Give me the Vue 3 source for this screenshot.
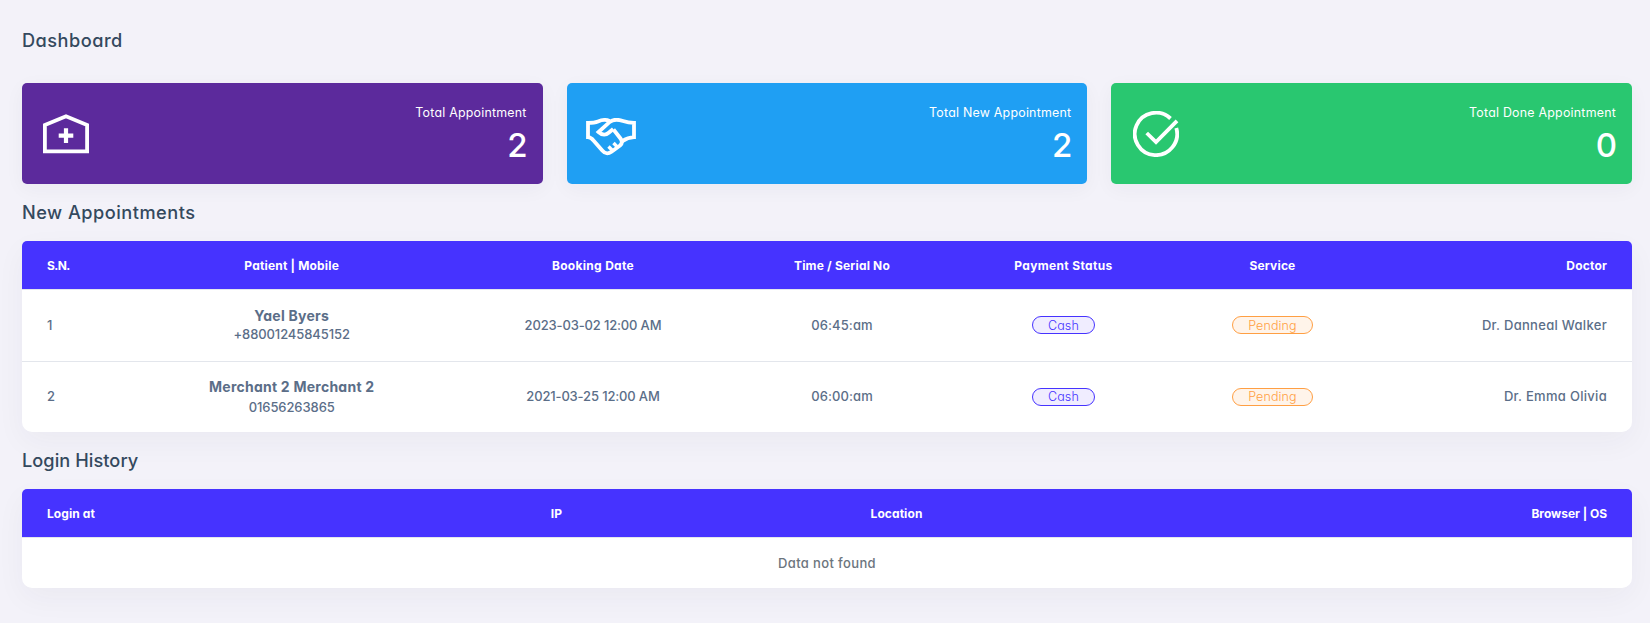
<script setup>
const cards = [
  { label: 'Total Appointment', value: 2, tone: 'purple', icon: 'clinic' },
  { label: 'Total New Appointment', value: 2, tone: 'blue', icon: 'handshake' },
  { label: 'Total Done Appointment', value: 0, tone: 'green', icon: 'check' },
]
const appointments = [
  { sn: 1, name: 'Yael Byers', mobile: '+88001245845152', date: '2023-03-02 12:00 AM', time: '06:45:am', doctor: 'Dr. Danneal Walker' },
  { sn: 2, name: 'Merchant 2 Merchant 2', mobile: '01656263865', date: '2021-03-25 12:00 AM', time: '06:00:am', doctor: 'Dr. Emma Olivia' },
]
const columns = ['S.N.', 'Patient | Mobile', 'Booking Date', 'Time / Serial No', 'Payment Status', 'Service', 'Doctor']
const loginColumns = ['Login at', 'IP', 'Location', 'Browser | OS']
</script>

<template>
  <main class="page">
    <h1 class="title page-title">Dashboard</h1>
    <section class="cards">
      <article v-for="card in cards" :key="card.label" class="card" :class="card.tone">
        <svg v-if="card.icon === 'clinic'" class="icon clinic" viewBox="0 0 46 40">
          <path d="M1.9 11.1 23 2.2l21.1 8.9v26.3H1.9z" />
          <path d="M23 14.3v14.7M15.7 21.7h14.6" stroke-width="4.2" />
        </svg>
        <svg v-else-if="card.icon === 'handshake'" class="icon handshake" viewBox="0 0 50 38">
          <path d="M23.5 3C20 1.3 16 1.7 12 3.4 9 4.6 6 4.8 2 4.8V19.2Q5 19.4 7.5 22.5L16.5 32.8Q20.5 37.4 25.5 33.8L34 27.5Q37.5 24.5 34.5 20.5L27.5 11.5" />
          <path d="M36 23.3Q42 19.5 48 19.2V4.8C43 4.8 40 4 37 3 30.5.8 26.5 1.5 23.5 4.2L12.5 14Q18 19 23 14.5L27.2 11" />
          <path d="M22.5 28.5 26.5 32.5M27.5 25 31 28.7" stroke-width="3.4" />
        </svg>
        <svg v-else class="icon check" viewBox="0 0 46 46">
          <path d="M37.5 7.5A21.2 21.2 0 1 0 43.3 17" />
          <path d="M13.7 22 23 31 44 9.8" />
        </svg>
        <div class="figures">
          <p class="label">{{ card.label }}</p>
          <p class="value">{{ card.value }}</p>
        </div>
      </article>
    </section>

    <h2 class="title">New Appointments</h2>
    <section class="panel appointments">
      <div class="row head">
        <div v-for="name in columns" :key="name">{{ name }}</div>
      </div>
      <div v-for="item in appointments" :key="item.sn" class="row body">
        <div class="cell">{{ item.sn }}</div>
        <div class="patient">
          <strong>{{ item.name }}</strong>
          {{ item.mobile }}
        </div>
        <div class="cell date">{{ item.date }}</div>
        <div class="cell time">{{ item.time }}</div>
        <div><span class="badge cash">Cash</span></div>
        <div><span class="badge pending">Pending</span></div>
        <div class="cell doctor">{{ item.doctor }}</div>
      </div>
    </section>

    <h2 class="title login-title">Login History</h2>
    <section class="panel logins">
      <div class="row head">
        <div v-for="name in loginColumns" :key="name">{{ name }}</div>
      </div>
      <p class="empty">Data not found</p>
    </section>
  </main>
</template>

<style>
body { background: #f3f2f9; }
</style>

<style scoped>
.page {
  box-sizing: border-box;
  height: 623px;
  padding: 0 18px 0 22px;
  overflow: hidden;
  font-family: Inter, "Open Sans", sans-serif;
  font-feature-settings: "cv11";
  font-size: 13px;
  font-weight: 500;
  color: #5b6e88;
}
p, h1, h2 { margin: 0; }
.title { height: 57px; line-height: 57px; font-size: 18.2px; font-weight: 480; letter-spacing: .48px; color: #34495e; }
.page-title { height: 83px; line-height: 80px; }
.login-title { letter-spacing: .05px; }
.cards { display: grid; grid-template-columns: repeat(3, 1fr); gap: 24px; height: 101px; }
.card {
  display: flex;
  align-items: center;
  justify-content: space-between;
  box-sizing: border-box;
  padding: 0 16px 0 20px;
  border-radius: 5px;
  box-shadow: 0 5px 20px rgba(44, 50, 63, .045);
  color: #fff;
}
.purple { background: #5c2a9c; }
.blue { background: #1f9ff3; }
.green { background: #29c770; }
.icon { fill: none; stroke: #fff; stroke-width: 3.8; }
.clinic { width: 46px; height: 40px; margin-left: 1px; }
.handshake { width: 50px; height: 38px; margin: 6px 0 0 -1px; }
.check { width: 46px; height: 46px; margin-left: 1.5px; }
.figures { padding-top: 4px; text-align: right; }
.label { font-size: 12.4px; line-height: 18px; font-weight: 400; letter-spacing: .23px; }
.value { margin-right: -1px; font-size: 33px; line-height: 46px; font-weight: 500; }
.panel { border-radius: 5px 5px 10px 10px; background: #fff; box-shadow: 0 10px 30px rgba(44, 50, 63, .045); }
.row { display: grid; align-items: center; box-sizing: border-box; padding: 0 25px; text-align: center; }
.appointments .row { grid-template-columns: 90px 309.4px 293.2px 204.8px 238.2px 179.8px 1fr; }
.logins .row { grid-template-columns: 275px 469px 211px 1fr; }
.row > :first-child { text-align: left; }
.row > :last-child { text-align: right; }
.head { height: 48px; border-radius: 5px 5px 0 0; background: #4633ff; color: #fff; font-size: 12px; font-weight: 700; letter-spacing: .18px; }
.logins .head { letter-spacing: .08px; }
.logins .head :last-child { letter-spacing: -.03px; }
.appointments .head :nth-child(1) { letter-spacing: -.6px; }
.appointments .head :nth-child(3) { letter-spacing: .3px; }
.appointments .head :nth-child(5) { letter-spacing: .34px; }
.body { height: 72px; padding-bottom: 1px; border-top: 1px solid #e3e6ec; }
.body + .body { height: 71px; padding-bottom: 0; }
.cell { padding-bottom: 1px; }
.body + .body .cell { padding-bottom: 2px; }
.date { letter-spacing: -.15px; }
.time { letter-spacing: .1px; }
.doctor { letter-spacing: .3px; }
.patient { line-height: 19px; letter-spacing: -.09px; }
.patient strong { display: block; font-size: 14px; font-weight: 700; letter-spacing: .24px; }
.body + .body .patient { line-height: 20px; }
.badge {
  display: block;
  box-sizing: border-box;
  height: 18px;
  margin: 0 auto;
  border: 1px solid;
  border-radius: 9px;
  line-height: 17px;
  font-size: 12.5px;
  font-weight: 300;
  letter-spacing: .1px;
}
.body + .body .badge { line-height: 16px; }
.cash { width: 63px; color: #4633ff; background: #f0edff; }
.pending { width: 81px; color: #ff9f43; background: #fff4ea; }
.empty { height: 51px; border-top: 1px solid #e3e6ec; line-height: 51px; text-align: center; letter-spacing: .36px; color: #6c757d; box-sizing: border-box; }
</style>
